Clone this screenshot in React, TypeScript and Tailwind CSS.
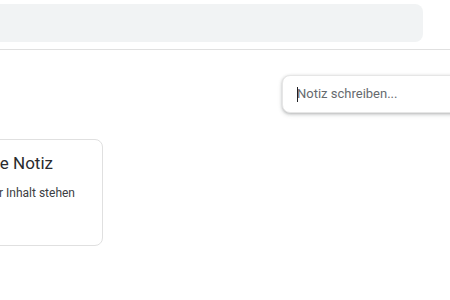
import React from "react";

export default function App() {
  return (
    <div
      className="w-[450px] h-[300px] overflow-clip bg-white relative"
      style={{ fontFamily: "Roboto, 'Noto Sans', Arial, sans-serif" }}
    >
      <header className="h-[50px] border-b border-[#e0e0e0] pt-[4px] pr-[27px] flex">
        <div className="h-[38px] flex-1 bg-[#f1f3f4] rounded-r-lg" />
      </header>
      <main className="pt-[25px]">
        <div className="relative ml-[282px] w-[400px] h-[38px] rounded-lg bg-white border border-[#e6e6e6] shadow-[0_1px_3px_rgba(60,64,67,0.3),0_2px_5px_rgba(60,64,67,0.12)] flex items-center pl-[14px]">
          <span className="absolute left-[14px] top-[11px] w-[1px] h-[15px] bg-[#202124]" />
          <input
            placeholder="Notiz schreiben..."
            className="w-full outline-none bg-transparent text-[13px] text-[#202124] placeholder:text-[#666a6e]"
          />
        </div>
        <div className="mt-[26px] ml-[-120px] w-[223px] h-[107px] rounded-lg border border-[#e0e0e0] bg-white pl-[16px] pr-[16px] pt-[11px] flex flex-col items-end">
          <div className="w-full flex flex-col items-end pr-[33px]">
            <div className="text-[17px] leading-[24px] text-[#2a2b2e] whitespace-nowrap">Erste Notiz</div>
          </div>
          <div className="w-full flex flex-col items-end pr-[11px] mt-[9px]">
            <div className="text-[12px] leading-[18px] text-[#3c4043] whitespace-nowrap">Hier sollte der Inhalt stehen</div>
          </div>
        </div>
      </main>
    </div>
  );
}
